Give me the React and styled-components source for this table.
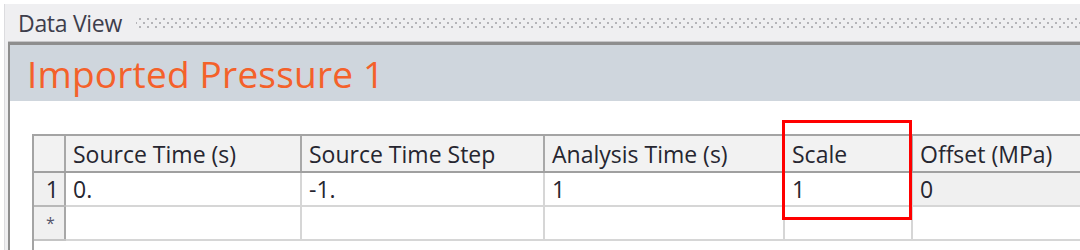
import React from 'react';
import styled, { createGlobalStyle } from 'styled-components';

const GlobalStyle = createGlobalStyle`
  html, body {
    margin: 0;
    padding: 0;
    background: #ffffff;
    overflow: hidden;
  }
  body {
    font-family: 'Open Sans', 'Noto Sans', sans-serif;
  }
`;

const Window = styled.div`
  width: 1080px;
  height: 250px;
  padding: 4px 0 0 4px;
  box-sizing: border-box;
  overflow: hidden;
`;

const Pane = styled.div`
  height: 100%;
  border-left: 1px solid #dcdcdf;
  background: #efeff1;
  display: flex;
  flex-direction: column;
`;

const TitleBar = styled.div`
  height: 38px;
  display: flex;
  align-items: center;
  gap: 14px;
  padding-left: 13px;
  flex-shrink: 0;
`;

const TitleText = styled.span`
  font-size: 23px;
  color: #3e3e4c;
  white-space: nowrap;
  letter-spacing: -0.3px;
`;

const Grip = styled.div`
  flex: 1;
  height: 14px;
  background-image:
    radial-gradient(circle, #b4b4b8 0.9px, transparent 1.3px),
    radial-gradient(circle, #b4b4b8 0.9px, transparent 1.3px);
  background-size: 8px 8px, 8px 8px;
  background-position: 0 -1px, 4px 3px;
`;

const Content = styled.div`
  flex: 1;
  margin-left: 3px;
  border-left: 2px solid #8e8e8e;
  border-top: 3px solid #8e8e8e;
  box-shadow: 0 -1px 0 #c6c6c8;
  background: #ffffff;
  display: flex;
  flex-direction: column;
  min-width: 0;
`;

const Banner = styled.div`
  height: 56px;
  background: #cfd6dd;
  display: flex;
  align-items: center;
  padding-left: 17px;
  flex-shrink: 0;
`;

const BannerTitle = styled.h1`
  margin: 0;
  font-size: 37px;
  font-weight: 400;
  color: #f4612a;
  white-space: nowrap;
  letter-spacing: 0.2px;
`;

const TableArea = styled.div`
  flex: 1;
  padding: 33px 0 0 22px;
  position: relative;
  overflow: hidden;
`;

const GridFrame = styled.div`
  height: 100%;
  border-left: 2px solid #a4a4a4;
  border-top: 2px solid #a4a4a4;
  overflow: hidden;
`;

const Table = styled.table`
  width: 1098px;
  border-collapse: collapse;
  table-layout: fixed;
  font-size: 23px;
  color: #262630;
  letter-spacing: 0;
`;

const HeadCell = styled.th`
  height: 35px;
  background: #f2f2f2;
  font-weight: 400;
  text-align: left;
  padding: 0 0 0 7px;
  white-space: nowrap;
  overflow: hidden;
  border-right: 2px solid #a8a8a8;
  border-bottom: 2px solid #a0a0a0;
`;

const RowHead = styled.td`
  background: #f0f0f0;
  padding: ${(p) => (p.$star ? '0 0 0 3px' : '0 5px 0 0')};
  border-right: 2px solid #a8a8a8;
  border-bottom: 2px solid ${(p) => (p.$last ? '#c4c4c4' : '#b8b8b8')};
  font-size: ${(p) => (p.$star ? '16px' : '23px')};
  color: ${(p) => (p.$star ? '#55556a' : '#262630')};
  text-align: ${(p) => (p.$star ? 'center' : 'right')};
`;

const Cell = styled.td`
  height: 32px;
  padding: 0 0 0 7px;
  white-space: nowrap;
  overflow: hidden;
  background: ${(p) => (p.$readonly ? '#f0f0f0' : '#ffffff')};
  border-right: 2px solid #d6d6d6;
  border-bottom: 2px solid #d6d6d6;
`;

const Highlight = styled.div`
  position: absolute;
  left: 772px;
  top: 19px;
  width: 124px;
  height: 94px;
  border: 3px solid #ff0000;
  pointer-events: none;
`;

const columns = [
  { label: 'Source Time (s)', width: 236 },
  { label: 'Source Time Step', width: 243 },
  { label: 'Analysis Time (s)', width: 240 },
  { label: 'Scale', width: 128 },
  { label: 'Offset (MPa)', width: 220 },
];

const rows = [
  { id: '1', values: ['0.', '-1.', '1', '1', '0'] },
  { id: '*', values: ['', '', '', '', ''], star: true },
];

export default function App() {
  return (
    <>
      <GlobalStyle />
      <Window>
        <Pane>
          <TitleBar>
            <TitleText>Data View</TitleText>
            <Grip />
          </TitleBar>
          <Content>
            <Banner>
              <BannerTitle>Imported Pressure 1</BannerTitle>
            </Banner>
            <TableArea>
              <GridFrame>
                <Table>
                  <colgroup>
                    <col style={{ width: 31 }} />
                    {columns.map((c) => (
                      <col key={c.label} style={{ width: c.width }} />
                    ))}
                  </colgroup>
                  <thead>
                    <tr>
                      <HeadCell />
                      {columns.map((c) => (
                        <HeadCell key={c.label}>{c.label}</HeadCell>
                      ))}
                    </tr>
                  </thead>
                  <tbody>
                    {rows.map((r, ri) => (
                      <tr key={r.id}>
                        <RowHead $star={r.star} $last={ri === rows.length - 1}>
                          {r.id}
                        </RowHead>
                        {r.values.map((v, i) => (
                          <Cell key={i} $readonly={!r.star && i === 4}>
                            {v}
                          </Cell>
                        ))}
                      </tr>
                    ))}
                  </tbody>
                </Table>
              </GridFrame>
              <Highlight />
            </TableArea>
          </Content>
        </Pane>
      </Window>
    </>
  );
}
